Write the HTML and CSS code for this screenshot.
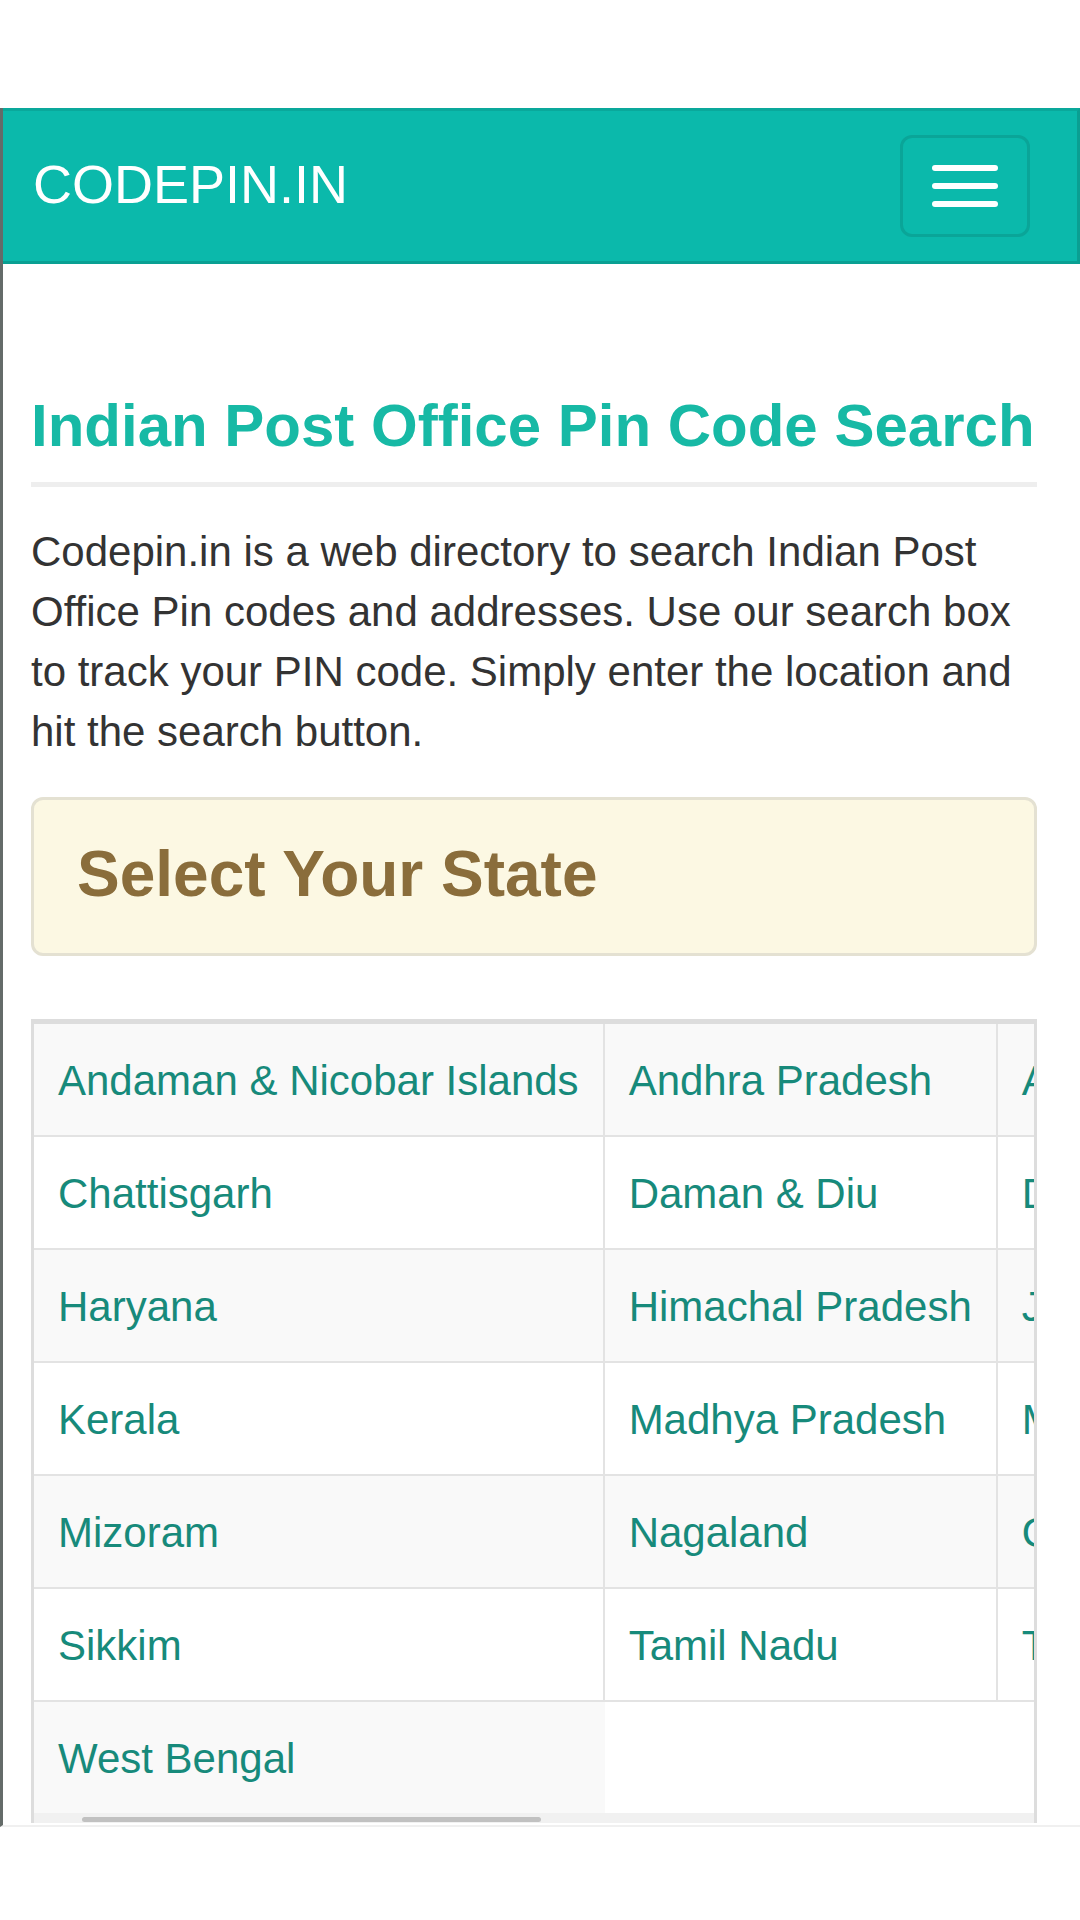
FILE: index.html
```html
<!DOCTYPE html>
<html lang="en">

<head>
    <meta charset="UTF-8">
    <title>Codepin.in - Indian Post Office Pin Code Search</title>
    <link rel="stylesheet" href="styles.css">
</head>

<body>
    <div class="screen">
        <nav class="navbar">
            <a class="brand" href="#">CODEPIN.IN</a>
            <button class="navbar-toggle" type="button">
                <span class="icon-bar"></span>
                <span class="icon-bar"></span>
                <span class="icon-bar"></span>
            </button>
        </nav>

        <div class="container">
            <h1 class="page-title">Indian Post Office Pin Code Search</h1>
            <p class="intro">Codepin.in is a web directory to search Indian Post Office Pin codes and addresses. Use our search box to track your PIN code. Simply enter the location and hit the search button.</p>

            <div class="alert-state">
                <h2>Select Your State</h2>
            </div>

            <div class="table-wrap">
                <table class="state-table">
                    <tr>
                        <td><a href="#">Andaman &amp; Nicobar Islands</a></td>
                        <td><a href="#">Andhra Pradesh</a></td>
                        <td><a href="#">Arunachal Pradesh</a></td>
                        <td><a href="#">Assam</a></td>
                        <td><a href="#">Bihar</a></td>
                    </tr>
                    <tr>
                        <td><a href="#">Chattisgarh</a></td>
                        <td><a href="#">Daman &amp; Diu</a></td>
                        <td><a href="#">Delhi</a></td>
                        <td><a href="#">Goa</a></td>
                        <td><a href="#">Gujarat</a></td>
                    </tr>
                    <tr>
                        <td><a href="#">Haryana</a></td>
                        <td><a href="#">Himachal Pradesh</a></td>
                        <td><a href="#">Jammu &amp; Kashmir</a></td>
                        <td><a href="#">Jharkhand</a></td>
                        <td><a href="#">Karnataka</a></td>
                    </tr>
                    <tr>
                        <td><a href="#">Kerala</a></td>
                        <td><a href="#">Madhya Pradesh</a></td>
                        <td><a href="#">Maharashtra</a></td>
                        <td><a href="#">Manipur</a></td>
                        <td><a href="#">Meghalaya</a></td>
                    </tr>
                    <tr>
                        <td><a href="#">Mizoram</a></td>
                        <td><a href="#">Nagaland</a></td>
                        <td><a href="#">Orissa</a></td>
                        <td><a href="#">Pondicherry</a></td>
                        <td><a href="#">Punjab</a></td>
                    </tr>
                    <tr>
                        <td><a href="#">Sikkim</a></td>
                        <td><a href="#">Tamil Nadu</a></td>
                        <td><a href="#">Tripura</a></td>
                        <td><a href="#">Uttar Pradesh</a></td>
                        <td><a href="#">Uttarakhand</a></td>
                    </tr>
                    <tr class="last-row">
                        <td><a href="#">West Bengal</a></td>
                    </tr>
                </table>
                <div class="scrollbar">
                    <div class="scrollbar-thumb"></div>
                </div>
            </div>
        </div>
    </div>
</body>

</html>
```

FILE: styles.css
```css
body {
    margin: 0;
    background: #fff;
    font-family: "Liberation Sans", Arial, Helvetica, sans-serif;
    color: #333;
}

.screen {
    margin-top: 108px;
    height: 1717px;
    border-left: 3px solid #646b69;
    border-bottom: 2px solid #f0f0f0;
    overflow: hidden;
}

/* barra do topo */
.navbar {
    display: flex;
    align-items: center;
    justify-content: space-between;
    height: 150px;
    background-color: #0bb9ab;
    border-top: 3px solid #0aa89b;
    border-bottom: 3px solid #0aa093;
    border-right: 3px solid #0a9f92;
}

.brand {
    margin-left: 30px;
    margin-bottom: 4px;
    font-size: 54px;
    color: #fff;
    text-decoration: none;
}

.navbar-toggle {
    display: flex;
    flex-direction: column;
    gap: 12px;
    margin-right: 47px;
    padding: 27px 29px;
    background: transparent;
    border: 3px solid #0aa598;
    border-radius: 12px;
}

.icon-bar {
    display: block;
    width: 66px;
    height: 6px;
    border-radius: 3px;
    background-color: #fff;
}

.container {
    padding: 0 43px 0 28px;
}

.page-title {
    margin: 129px 0 0;
    padding-bottom: 23px;
    border-bottom: 5px solid #eee;
    font-size: 60px;
    line-height: 66px;
    font-weight: bold;
    color: #17b9a5;
    white-space: nowrap;
}

.intro {
    margin: 35px 0 0;
    font-size: 42px;
    line-height: 60px;
}

.alert-state {
    margin-top: 35px;
    padding: 39px 43px 44px;
    background-color: #fcf8e3;
    border: 3px solid #e4e1d2;
    border-radius: 12px;
}

.alert-state h2 {
    margin: 0;
    font-size: 64px;
    line-height: 70px;
    font-weight: bold;
    color: #8a6d3b;
}

.table-wrap {
    margin-top: 63px;
    border: 3px solid #ddd;
    border-top-width: 5px;
    border-bottom: none;
    overflow: hidden;
}

.state-table {
    border-collapse: separate;
    border-spacing: 0;
    white-space: nowrap;
}

.state-table td {
    padding: 27px 24px 24px;
    font-size: 42px;
    line-height: 60px;
    border-right: 2px solid #e3e3e3;
    border-bottom: 2px solid #e3e3e3;
}

.state-table tr:nth-child(odd) td {
    background-color: #f9f9f9;
}

.state-table .last-row td {
    border-right: none;
    border-bottom: none;
}

.state-table a {
    color: #178a7b;
    text-decoration: none;
}

.scrollbar {
    height: 10px;
    background-color: #f1f1f1;
}

.scrollbar-thumb {
    width: 459px;
    height: 5px;
    margin-left: 48px;
    position: relative;
    top: 4px;
    border-radius: 3px;
    background-color: #c1c1c1;
}
```
